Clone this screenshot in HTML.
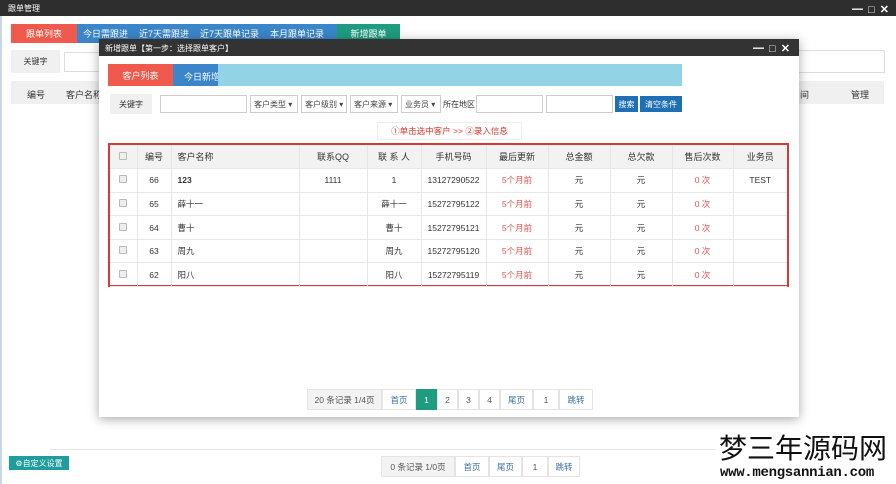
<!DOCTYPE html>
<html><head><meta charset="utf-8"><style>
*{margin:0;padding:0;box-sizing:border-box}
body{width:896px;height:484px;overflow:hidden;background:#fff;font-family:"Liberation Sans","Noto Sans CJK SC",sans-serif;font-size:9px;color:#333;position:relative}
.a{position:absolute;white-space:nowrap}
.c{display:flex;align-items:center;justify-content:center}
.ctl{color:#fff;font-size:11px;font-weight:bold;letter-spacing:1px}
table{border-collapse:collapse;position:absolute;left:110px;top:145px;width:677px;table-layout:fixed}
td,th{height:23.6px;border-bottom:1px solid #e8e8e8;border-right:1px solid #e6e6e6;text-align:center;font-size:8.5px;font-weight:normal}
th{background:#f2f2f2;font-size:9px;color:#333}
td:last-child,th:last-child{border-right:none}
.l{text-align:left;padding-left:6px}
.r{color:#d9534f}
.cb{display:inline-block;width:8px;height:8px;border:1px solid #bbb;background:#eee;border-radius:1px}
.pg{border:1px solid #e4e4e4;height:21px;font-size:8.5px;color:#3a6ea5;background:#fff}
.sel{border:1px solid #ccc;height:18px;font-size:8px;top:95px;color:#444;padding-left:3px;display:flex;align-items:center}
</style></head><body>
<div class="a" style="left:0;top:0;width:896px;height:16px;background:#2e2e2e"></div>
<div class="a" style="left:8px;top:3px;color:#fff;font-size:8px">跟单管理</div>
<div class="a ctl" style="left:852px;top:1px">━ □ ✕</div>
<div class="a" style="left:0;top:16px;width:2px;height:468px;background:#c9d6e3"></div>
<div class="a" style="left:11px;top:24px;width:66px;height:19px;background:#ef5a4c;color:#fff" ><div class="c" style="height:19px">跟单列表</div></div>
<div class="a" style="left:77px;top:24px;width:260px;height:19px;background:#3a86c8;color:#fff;font-size:9px;display:flex;align-items:center;gap:11px;padding-left:6px">
<span>今日需跟进</span><span>近7天需跟进</span><span>近7天跟单记录</span><span>本月跟单记录</span></div>
<div class="a c" style="left:337px;top:24px;width:63px;height:19px;background:#1f9c7f;color:#fff">新增跟单</div>
<div class="a c" style="left:11px;top:50px;width:49px;height:23px;background:#f0f0f0;font-size:8px">关键字</div>
<div class="a" style="left:64px;top:52px;width:40px;height:20px;border:1px solid #ddd"></div>
<div class="a" style="left:798px;top:50px;width:87px;height:23px;border:1px solid #ddd;border-left:none"></div>
<div class="a" style="left:11px;top:81px;width:873px;height:23px;background:#f0f0f0"></div>
<div class="a" style="left:27px;top:88px">编号</div>
<div class="a" style="left:66px;top:88px">客户名称</div>
<div class="a" style="left:800px;top:88px">间</div>
<div class="a" style="left:851px;top:88px">管理</div>
<div class="a" style="left:50px;top:449px;width:832px;height:1px;background:#e6e6e6"></div>
<div class="a c" style="left:9px;top:456px;width:60px;height:14px;background:#1f9c9c;color:#fff;font-size:8px">⚙自定义设置</div>
<div class="a" style="left:381px;top:456px;display:flex">
<div class="pg c" style="width:74px;background:#f3f3f3;color:#555">0 条记录 1/0页</div>
<div class="pg c" style="width:34px">首页</div><div class="pg c" style="width:33px">尾页</div>
<div class="pg c" style="width:26px;color:#555">1</div><div class="pg c" style="width:32px">跳转</div></div>
<div class="a" style="left:716px;top:428px;width:180px;height:56px;background:#fff"></div>
<div class="a" style="left:719px;top:430px;font-size:28px;color:#111;font-family:'Noto Sans CJK SC',sans-serif;line-height:34px;letter-spacing:0">梦三年源码网</div>
<div class="a" style="left:720px;top:465px;font-size:14px;color:#111;font-family:'Liberation Mono',monospace;font-weight:bold;letter-spacing:-0.3px">www.mengsannian.com</div>

<div class="a" style="left:99px;top:39px;width:700px;height:378px;background:#fff;box-shadow:0 2px 10px rgba(0,0,0,.35)"></div>
<div class="a" style="left:99px;top:39px;width:700px;height:17px;background:#333"></div>
<div class="a" style="left:105px;top:43px;color:#fff;font-size:8px">新增跟单【第一步：选择跟单客户】</div>
<div class="a ctl" style="left:753px;top:40px">━ □ ✕</div>
<div class="a c" style="left:108px;top:64px;width:65px;height:22px;background:#ef5a4c;color:#fff">客户列表</div>
<div class="a" style="left:173px;top:64px;width:45px;height:22px;background:#3a86c8;color:#fff;padding:6px 0 0 11px;overflow:hidden">今日新增</div>
<div class="a" style="left:218px;top:64px;width:464px;height:22px;background:#93d3e6"></div>
<div class="a c" style="left:110px;top:94px;width:42px;height:20px;background:#f0f0f0;font-size:8px">关键字</div>
<div class="a" style="left:160px;top:95px;width:87px;height:18px;border:1px solid #ccc"></div>
<div class="a sel" style="left:250px;width:48px">客户类型 ▾</div>
<div class="a sel" style="left:301px;width:46px">客户级别 ▾</div>
<div class="a sel" style="left:350px;width:48px">客户来源 ▾</div>
<div class="a sel" style="left:401px;width:40px">业务员 ▾</div>
<div class="a" style="left:443px;top:99px;font-size:8px">所在地区</div>
<div class="a" style="left:476px;top:95px;width:67px;height:18px;border:1px solid #ccc"></div>
<div class="a" style="left:546px;top:95px;width:67px;height:18px;border:1px solid #ccc"></div>
<div class="a c" style="left:615px;top:96px;width:23px;height:16px;background:#1f6fb5;color:#fff;font-size:8px">搜索</div>
<div class="a c" style="left:640px;top:96px;width:42px;height:16px;background:#1f6fb5;color:#fff;font-size:8px">清空条件</div>
<div class="a c" style="left:377px;top:122px;width:145px;height:18px;border:1px solid #eee;color:#d9342b;font-size:8.5px">①单击选中客户 &gt;&gt; ②录入信息</div>
<div class="a" style="left:108px;top:143px;width:681px;height:144px;border:2px solid #d33a3a"></div>
<table>
<colgroup><col style="width:27px"><col style="width:34px"><col style="width:128px"><col style="width:68px"><col style="width:54px"><col style="width:65px"><col style="width:62px"><col style="width:62px"><col style="width:62px"><col style="width:61px"><col style="width:54px"></colgroup>
<tr><th><span class="cb"></span></th><th>编号</th><th class="l">客户名称</th><th>联系QQ</th><th>联 系 人</th><th>手机号码</th><th>最后更新</th><th>总金额</th><th>总欠款</th><th>售后次数</th><th>业务员</th></tr>
<tr><td><span class="cb"></span></td><td>66</td><td class="l"><b>123</b></td><td>1111</td><td>1</td><td>13127290522</td><td class="r">5个月前</td><td>元</td><td>元</td><td class="r">0 次</td><td>TEST</td></tr>
<tr><td><span class="cb"></span></td><td>65</td><td class="l">薛十一</td><td></td><td>薛十一</td><td>15272795122</td><td class="r">5个月前</td><td>元</td><td>元</td><td class="r">0 次</td><td></td></tr>
<tr><td><span class="cb"></span></td><td>64</td><td class="l">曹十</td><td></td><td>曹十</td><td>15272795121</td><td class="r">5个月前</td><td>元</td><td>元</td><td class="r">0 次</td><td></td></tr>
<tr><td><span class="cb"></span></td><td>63</td><td class="l">周九</td><td></td><td>周九</td><td>15272795120</td><td class="r">5个月前</td><td>元</td><td>元</td><td class="r">0 次</td><td></td></tr>
<tr><td><span class="cb"></span></td><td>62</td><td class="l">阳八</td><td></td><td>阳八</td><td>15272795119</td><td class="r">5个月前</td><td>元</td><td>元</td><td class="r">0 次</td><td></td></tr>
</table>
<div class="a" style="left:307px;top:389px;display:flex">
<div class="pg c" style="width:75px;background:#f3f3f3;color:#555">20 条记录 1/4页</div>
<div class="pg c" style="width:34px">首页</div>
<div class="pg c" style="width:21px;background:#1f9c7f;color:#fff;border-color:#1f9c7f">1</div>
<div class="pg c" style="width:21px;color:#555">2</div><div class="pg c" style="width:21px;color:#555">3</div><div class="pg c" style="width:21px;color:#555">4</div>
<div class="pg c" style="width:33px">尾页</div><div class="pg c" style="width:26px;color:#555">1</div><div class="pg c" style="width:34px">跳转</div></div>
</body></html>
